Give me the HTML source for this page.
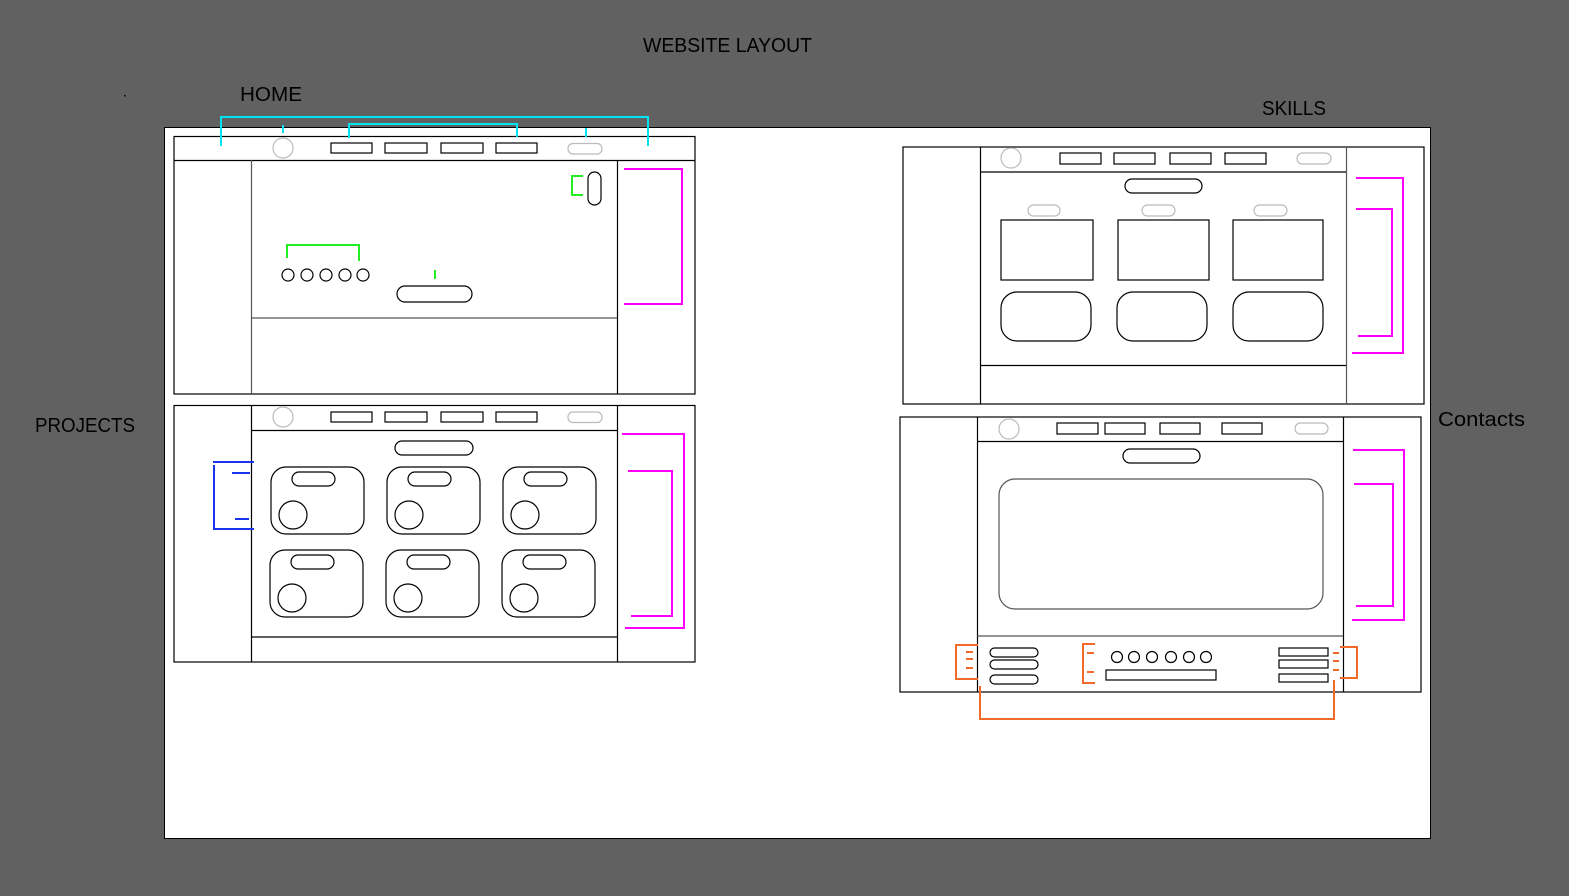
<!DOCTYPE html>
<html><head><meta charset="utf-8"><style>
html,body{margin:0;padding:0;background:#616161;}
svg{display:block}
text{font-family:"Liberation Sans",sans-serif;fill:#000;font-size:20px}
</style></head><body>
<svg width="1569" height="896" viewBox="0 0 1569 896" xmlns="http://www.w3.org/2000/svg">
<rect width="1569" height="896" fill="#616161"/>
<rect x="164.5" y="127.5" width="1266" height="711" fill="#fff" stroke="#000" stroke-width="1"/>

<text x="643" y="52" textLength="169" lengthAdjust="spacingAndGlyphs">WEBSITE LAYOUT</text>
<text x="240" y="101" textLength="62" lengthAdjust="spacingAndGlyphs">HOME</text>
<text x="1262" y="115" textLength="64" lengthAdjust="spacingAndGlyphs">SKILLS</text>
<text x="35" y="432" textLength="100" lengthAdjust="spacingAndGlyphs">PROJECTS</text>
<text x="1438" y="426" textLength="87" lengthAdjust="spacingAndGlyphs">Contacts</text>
<rect x="124" y="95" width="1.5" height="1.5" fill="#000"/>

<g fill="none" stroke="#000" stroke-width="1.2">
<!-- HOME -->
<rect x="174" y="136.5" width="521" height="257.5"/>
<line x1="174" y1="160.5" x2="695" y2="160.5"/>
<line x1="251.5" y1="160" x2="251.5" y2="394" stroke="#555"/>
<line x1="617.5" y1="160" x2="617.5" y2="394"/>
<line x1="251" y1="318" x2="617" y2="318" stroke="#555"/>
<circle cx="283" cy="148" r="10" stroke="#bbb"/>
<rect x="331" y="143" width="41" height="10"/><rect x="385" y="143" width="42" height="10"/><rect x="441" y="143" width="42" height="10"/><rect x="496" y="143" width="41" height="10"/>
<rect x="568" y="143.5" width="34" height="10.5" rx="5" stroke="#bbb"/>
<rect x="588" y="172" width="13" height="33" rx="6.5"/>
<circle cx="288" cy="275" r="6"/><circle cx="307" cy="275" r="6"/><circle cx="326" cy="275" r="6"/><circle cx="345" cy="275" r="6"/><circle cx="363" cy="275" r="6"/>
<rect x="397" y="286" width="75" height="16" rx="8"/>

<!-- PROJECTS -->
<rect x="174" y="405.5" width="521" height="256.5"/>
<line x1="251.5" y1="405" x2="251.5" y2="662"/>
<line x1="617.5" y1="405" x2="617.5" y2="662"/>
<line x1="251" y1="430.5" x2="617" y2="430.5"/>
<line x1="251" y1="637" x2="617" y2="637"/>
<circle cx="283" cy="417" r="10" stroke="#bbb"/>
<rect x="331" y="412" width="41" height="10"/><rect x="385" y="412" width="42" height="10"/><rect x="441" y="412" width="42" height="10"/><rect x="496" y="412" width="41" height="10"/>
<rect x="568" y="412" width="34" height="10.5" rx="5" stroke="#bbb"/>
<rect x="395" y="441" width="78" height="14" rx="7"/>
<g id="card"><rect x="271" y="467" width="93" height="67" rx="15"/><rect x="292" y="472" width="43" height="14" rx="7"/><circle cx="293" cy="515" r="14"/></g>
<use href="#card" x="116"/><use href="#card" x="232"/>
<use href="#card" x="-1" y="83"/><use href="#card" x="115" y="83"/><use href="#card" x="231" y="83"/>

<!-- SKILLS -->
<rect x="903" y="147" width="521" height="257"/>
<line x1="980.5" y1="147" x2="980.5" y2="404"/>
<line x1="1346.5" y1="147" x2="1346.5" y2="404" stroke="#555"/>
<line x1="980" y1="172" x2="1346" y2="172"/>
<line x1="980" y1="365.5" x2="1346" y2="365.5"/>
<circle cx="1011" cy="158" r="10" stroke="#bbb"/>
<rect x="1060" y="153" width="41" height="11"/><rect x="1114" y="153" width="41" height="11"/><rect x="1170" y="153" width="41" height="11"/><rect x="1225" y="153" width="41" height="11"/>
<rect x="1297" y="153" width="34" height="11" rx="5.5" stroke="#bbb"/>
<rect x="1125" y="179" width="77" height="14" rx="7"/>
<rect x="1028" y="205" width="32" height="11" rx="5.5" stroke="#bbb"/><rect x="1142" y="205" width="33" height="11" rx="5.5" stroke="#bbb"/><rect x="1254" y="205" width="33" height="11" rx="5.5" stroke="#bbb"/>
<rect x="1001" y="220" width="92" height="60"/><rect x="1118" y="220" width="91" height="60"/><rect x="1233" y="220" width="90" height="60"/>
<rect x="1001" y="292" width="90" height="49" rx="16"/><rect x="1117" y="292" width="90" height="49" rx="16"/><rect x="1233" y="292" width="90" height="49" rx="16"/>

<!-- CONTACTS -->
<rect x="900" y="417" width="521" height="275"/>
<line x1="977.5" y1="417" x2="977.5" y2="692"/>
<line x1="1343.5" y1="417" x2="1343.5" y2="692"/>
<line x1="977" y1="441.5" x2="1343" y2="441.5"/>
<line x1="977" y1="636" x2="1343" y2="636" stroke="#555"/>
<circle cx="1009" cy="429" r="10" stroke="#bbb"/>
<rect x="1057" y="423" width="41" height="11"/><rect x="1105" y="423" width="40" height="11"/><rect x="1160" y="423" width="40" height="11"/><rect x="1222" y="423" width="40" height="11"/>
<rect x="1295" y="423" width="33" height="11" rx="5.5" stroke="#bbb"/>
<rect x="1123" y="449" width="77" height="14" rx="7"/>
<rect x="999" y="479" width="324" height="130" rx="16" stroke="#555"/>
<rect x="990" y="648" width="48" height="9" rx="4.5"/><rect x="990" y="660" width="48" height="9" rx="4.5"/><rect x="990" y="675" width="48" height="9" rx="4.5"/>
<circle cx="1117" cy="657" r="5.5"/><circle cx="1134" cy="657" r="5.5"/><circle cx="1152" cy="657" r="5.5"/><circle cx="1171" cy="657" r="5.5"/><circle cx="1189" cy="657" r="5.5"/><circle cx="1206" cy="657" r="5.5"/>
<rect x="1106" y="670" width="110" height="10"/>
<rect x="1279" y="648" width="49" height="8"/><rect x="1279" y="660" width="49" height="8"/><rect x="1279" y="674" width="49" height="8"/>
</g>

<!-- cyan -->
<g fill="none" stroke="#00e5f0" stroke-width="2">
<path d="M221 146V117H648V146"/><path d="M283 125V133"/><path d="M349 138V124H517V137"/><path d="M586 128V137"/>
</g>
<!-- green -->
<g fill="none" stroke="#22ee22" stroke-width="2">
<path d="M583 176H572V195H583"/><path d="M287 258V245H359V261"/><path d="M435 270V279"/>
</g>
<!-- magenta -->
<g fill="none" stroke="#ff00ff" stroke-width="2">
<path d="M624 169H682V304H624"/>
<path d="M622 434H684V628H625"/><path d="M628 471H672V616H631"/>
<path d="M1356 178H1403V353H1352"/><path d="M1356 209H1392V336H1358"/>
<path d="M1353 450H1404V620H1352"/><path d="M1354 484H1393V606H1356"/>
</g>
<!-- blue -->
<g fill="none" stroke="#1a33ee" stroke-width="2">
<path d="M213 462H254"/><path d="M214 465V529H254"/><path d="M232 473H250"/><path d="M235 519H249"/>
</g>
<!-- orange -->
<g fill="none" stroke="#f26a2a" stroke-width="2">
<path d="M978 645H956V679H978"/><path d="M966 652H973M966 659H973M966 668H973"/>
<path d="M1095 644H1083V683H1095"/><path d="M1087 653H1094M1087 672H1094"/>
<path d="M1340 647H1357V678H1340"/><path d="M1333 653H1339M1333 661H1339M1333 670H1339"/>
<path d="M980 686V719H1334V680"/>
</g>
</svg>
</body></html>
